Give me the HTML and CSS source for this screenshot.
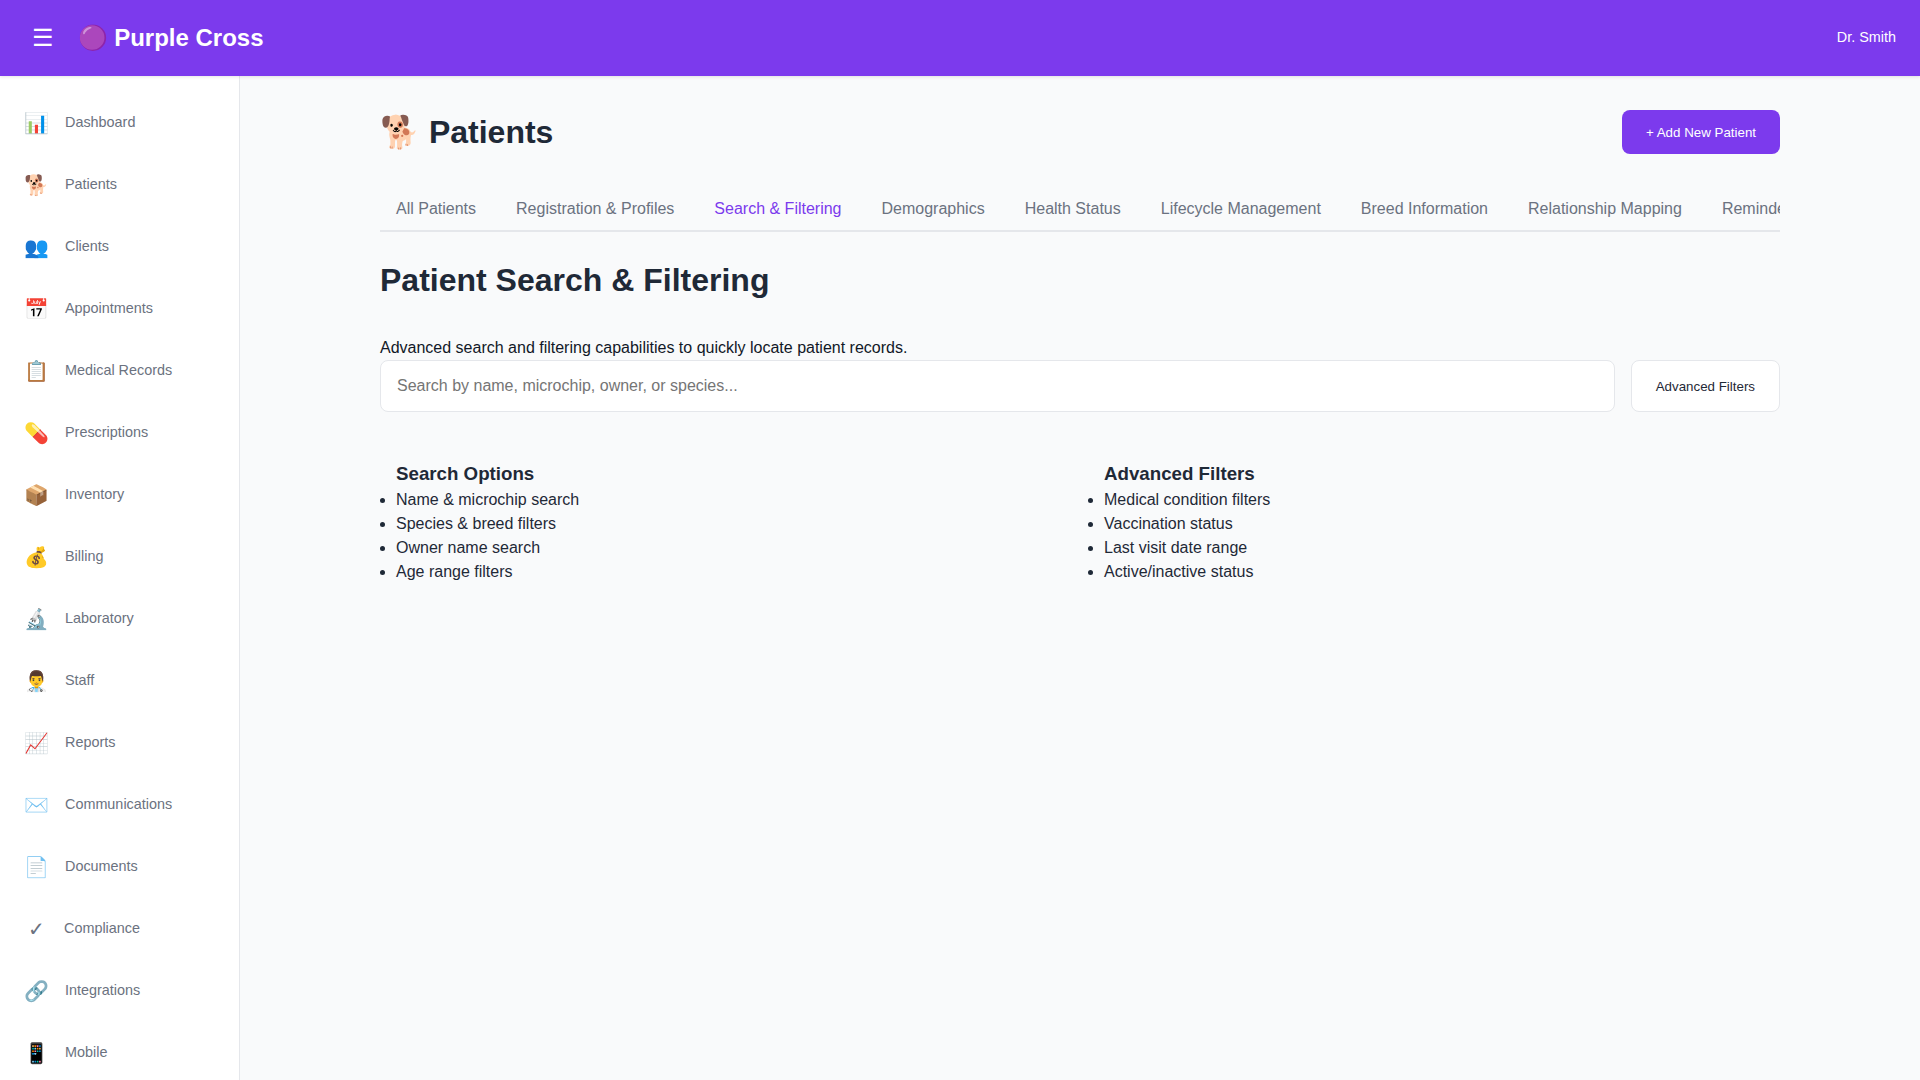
FILE: index.html

```html
<!DOCTYPE html>
<html lang="en">
<head>
    <meta charset="UTF-8">
    <meta name="viewport" content="width=device-width, initial-scale=1.0">
    <title>Purple Cross - Patients</title>
    <link rel="stylesheet" href="styles.css">
</head>
<body>
    <header class="topbar">
        <div class="topbar-left">
            <button class="menu-btn" type="button">☰</button>
            <div class="brand">🟣 Purple Cross</div>
        </div>
        <div class="user-name">Dr. Smith</div>
    </header>
    <div class="layout">
        <nav class="sidebar">
            <a class="nav-item" href="#"><span class="nav-icon">📊</span><span>Dashboard</span></a>
            <a class="nav-item" href="#"><span class="nav-icon">🐕</span><span>Patients</span></a>
            <a class="nav-item" href="#"><span class="nav-icon">👥</span><span>Clients</span></a>
            <a class="nav-item" href="#"><span class="nav-icon">📅</span><span>Appointments</span></a>
            <a class="nav-item" href="#"><span class="nav-icon">📋</span><span>Medical Records</span></a>
            <a class="nav-item" href="#"><span class="nav-icon">💊</span><span>Prescriptions</span></a>
            <a class="nav-item" href="#"><span class="nav-icon">📦</span><span>Inventory</span></a>
            <a class="nav-item" href="#"><span class="nav-icon">💰</span><span>Billing</span></a>
            <a class="nav-item" href="#"><span class="nav-icon">🔬</span><span>Laboratory</span></a>
            <a class="nav-item" href="#"><span class="nav-icon">👨‍⚕️</span><span>Staff</span></a>
            <a class="nav-item" href="#"><span class="nav-icon">📈</span><span>Reports</span></a>
            <a class="nav-item" href="#"><span class="nav-icon">✉️</span><span>Communications</span></a>
            <a class="nav-item" href="#"><span class="nav-icon">📄</span><span>Documents</span></a>
            <a class="nav-item" href="#"><span class="nav-icon">✓</span><span>Compliance</span></a>
            <a class="nav-item" href="#"><span class="nav-icon">🔗</span><span>Integrations</span></a>
            <a class="nav-item" href="#"><span class="nav-icon">📱</span><span>Mobile</span></a>
        </nav>
        <main class="main">
            <div class="content">
                <div class="page-header">
                    <h1 class="page-title">🐕 Patients</h1>
                    <button class="btn-primary" type="button">+ Add New Patient</button>
                </div>
                <div class="tabs">
                    <a class="tab" href="#">All Patients</a>
                    <a class="tab" href="#">Registration &amp; Profiles</a>
                    <a class="tab active" href="#">Search &amp; Filtering</a>
                    <a class="tab" href="#">Demographics</a>
                    <a class="tab" href="#">Health Status</a>
                    <a class="tab" href="#">Lifecycle Management</a>
                    <a class="tab" href="#">Breed Information</a>
                    <a class="tab" href="#">Relationship Mapping</a>
                    <a class="tab" href="#">Reminders</a>
                </div>
                <h2 class="section-title">Patient Search &amp; Filtering</h2>
                <p class="section-desc">Advanced search and filtering capabilities to quickly locate patient records.</p>
                <div class="search-row">
                    <input class="search-input" type="text" placeholder="Search by name, microchip, owner, or species...">
                    <button class="btn-secondary" type="button">Advanced Filters</button>
                </div>
                <div class="options-grid">
                    <div class="options-col">
                        <h3>Search Options</h3>
                        <ul>
                            <li>Name &amp; microchip search</li>
                            <li>Species &amp; breed filters</li>
                            <li>Owner name search</li>
                            <li>Age range filters</li>
                        </ul>
                    </div>
                    <div class="options-col">
                        <h3>Advanced Filters</h3>
                        <ul>
                            <li>Medical condition filters</li>
                            <li>Vaccination status</li>
                            <li>Last visit date range</li>
                            <li>Active/inactive status</li>
                        </ul>
                    </div>
                </div>
            </div>
        </main>
    </div>
</body>
</html>
```

FILE: styles.css

```css
* {
    box-sizing: border-box;
}
body {
    font-family: 'Liberation Sans', Arial, sans-serif;
    line-height: 1.5;
    margin: 0;
    height: 100vh;
    overflow: hidden;
    background-color: #f9fafb;
    color: #1f2937;
    display: flex;
    flex-direction: column;
}
.topbar {
    height: 76px;
    flex-shrink: 0;
    background-color: #7c3aed;
    color: white;
    display: flex;
    justify-content: space-between;
    align-items: center;
    padding: 0 24px;
    box-shadow: 0 1px 3px rgba(0, 0, 0, 0.1);
    position: relative;
}
.topbar-left {
    display: flex;
    align-items: center;
    gap: 15.5px;
}
.menu-btn {
    background: none;
    border: none;
    color: white;
    font-size: 24px;
    font-family: inherit;
    padding: 8px;
    cursor: pointer;
}
.brand {
    font-size: 24px;
    font-weight: 700;
}
.user-name {
    font-size: 14.4px;
}
.layout {
    flex: 1;
    display: flex;
    min-height: 0;
}
.sidebar {
    width: 240px;
    flex-shrink: 0;
    background: white;
    border-right: 1px solid #e5e7eb;
    padding: 16px 0;
    overflow: hidden;
}
.nav-item {
    display: flex;
    align-items: center;
    gap: 16px;
    height: 62px;
    padding: 0 24px;
    color: #6b7280;
    font-size: 14.4px;
    text-decoration: none;
}
.nav-icon {
    font-size: 20px;
    min-width: 24px;
    text-align: center;
}
.main {
    flex: 1;
    min-width: 0;
    padding: 32px 24px;
    overflow: hidden;
}
.content {
    max-width: 1400px;
    margin: 0 auto;
}
.page-header {
    display: flex;
    justify-content: space-between;
    align-items: center;
    margin-bottom: 32px;
}
.page-title {
    font-size: 32px;
    font-weight: 700;
    margin: 0;
}
.btn-primary {
    background-color: #7c3aed;
    color: white;
    border: none;
    border-radius: 8px;
    height: 44px;
    padding: 0 24px;
    font-size: 13.33px;
    font-family: inherit;
    cursor: pointer;
}
.tabs {
    display: flex;
    gap: 8px;
    overflow: hidden;
    border-bottom: 2px solid #e5e7eb;
    margin-bottom: 24px;
}
.tab {
    padding: 12px 16px;
    font-size: 16px;
    line-height: 18px;
    color: #6b7280;
    text-decoration: none;
    white-space: nowrap;
}
.tab.active {
    color: #7c3aed;
}
.section-title {
    font-size: 32px;
    font-weight: 700;
    margin: 0 0 32px;
}
.section-desc {
    font-size: 16px;
    margin: 0;
    color: #111827;
}
.search-row {
    display: flex;
    gap: 16px;
    margin-bottom: 48px;
}
.search-input {
    flex: 1;
    height: 52px;
    padding: 16px;
    font-size: 16px;
    font-family: inherit;
    border: 1px solid #e5e7eb;
    border-radius: 8px;
    background: white;
}
.btn-secondary {
    background: white;
    color: #1f2937;
    border: 1px solid #e5e7eb;
    border-radius: 8px;
    padding: 14px 24px;
    font-size: 13.33px;
    font-family: inherit;
    cursor: pointer;
}
.options-grid {
    display: grid;
    grid-template-columns: 1fr 1fr;
    gap: 16px;
}
.options-col h3 {
    font-size: 18.72px;
    font-weight: 700;
    margin: 0;
    padding-left: 16px;
}
.options-col ul {
    margin: 0;
    padding-left: 16px;
    font-size: 16px;
    line-height: 24px;
}
```
